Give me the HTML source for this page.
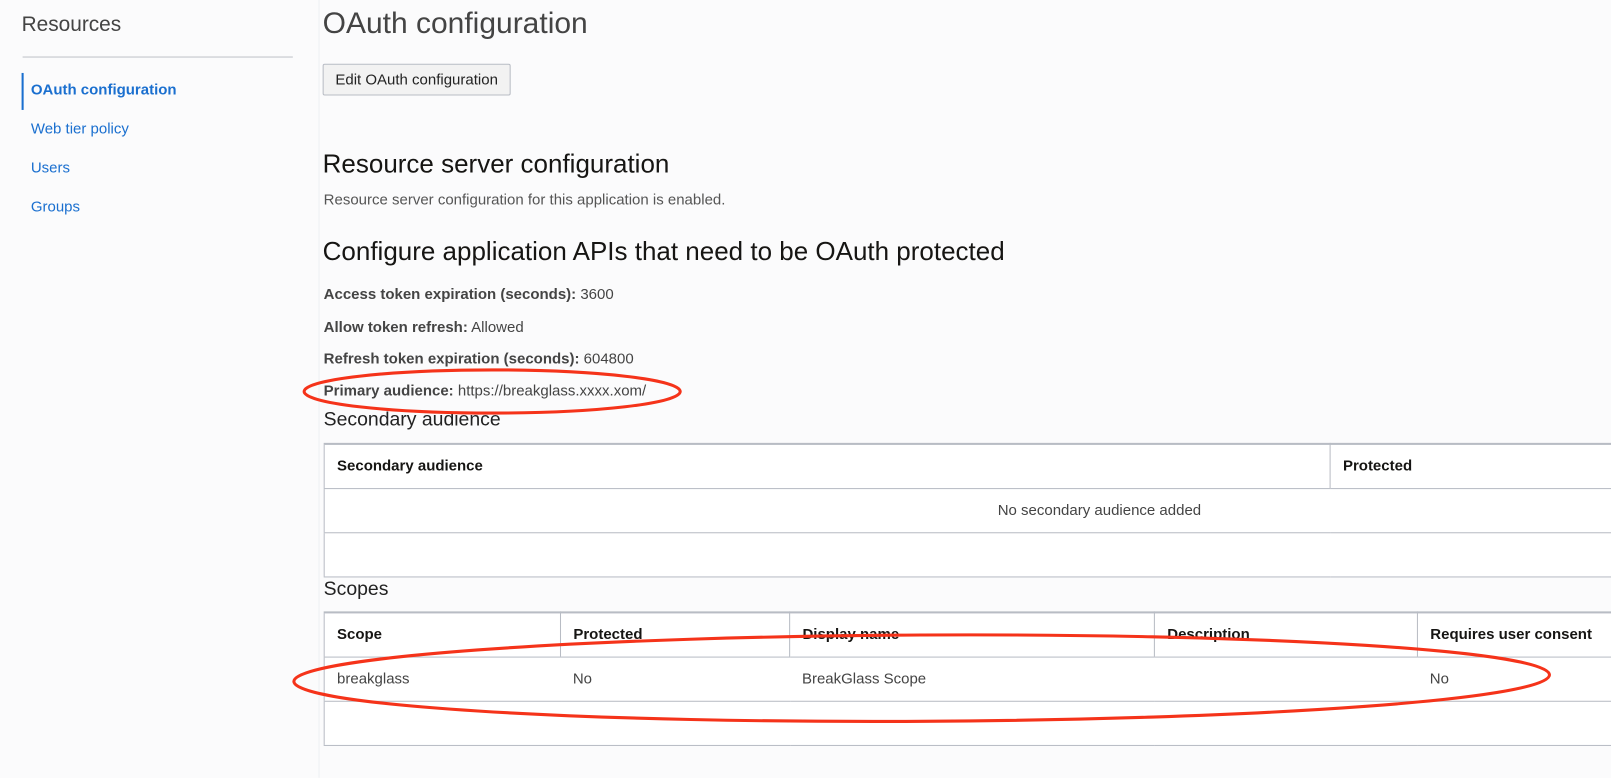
<!DOCTYPE html>
<html><head><style>
*{margin:0;padding:0;box-sizing:border-box}
body{width:1611px;height:757px;overflow:hidden;font-family:"Liberation Sans",sans-serif;background:#fbfbfc;position:relative;color:#333}
#w{position:absolute;left:0;top:0;width:1568px;height:737px;transform:scale(1.0275);transform-origin:0 0}
.side{position:absolute;left:0;top:0;width:311px;height:757px;background:#fbfbfc;border-right:1px solid #eef0f3}
.abs{position:absolute;white-space:nowrap}
.nav{position:absolute;left:30px;font-size:14.6px;color:#1a6fcf}
.b{font-weight:bold}
table{position:absolute;left:315px;border-collapse:collapse;background:#fff;border-top:2px solid #b8bcc4;border-left:1px solid #b8bcc4}
td{border-bottom:1px solid #b8bcc4;font-size:14.6px;padding:0 12px;height:43px;color:#444;white-space:nowrap}
td.h{font-weight:bold;color:#161513}
td.d{border-left:1px solid #b8bcc4}
.t{font-size:14.6px;color:#444}
</style></head><body><div id="w">
<div class="side">
<div class="abs" style="left:21px;top:13px;font-size:20.3px;color:#444">Resources</div>
<div style="position:absolute;left:22px;top:55px;width:263px;height:1px;background:#bfc2c8"></div>
<div style="position:absolute;left:21px;top:71px;width:2px;height:36px;background:#1a6fcf"></div>
<div class="nav b" style="top:80px">OAuth configuration</div>
<div class="nav" style="top:118px">Web tier policy</div>
<div class="nav" style="top:156px">Users</div>
<div class="nav" style="top:194px">Groups</div>
</div>
<div class="abs" style="left:314px;top:7px;font-size:29.2px;color:#444">OAuth configuration</div>
<div class="abs" style="left:314px;top:62px;width:183px;height:31px;border:1px solid #b8bcc4;border-radius:2px;background:#f2f2f2;font-size:14.6px;line-height:31px;text-align:center;color:#222">Edit OAuth configuration</div>
<div class="abs" style="left:314px;top:146px;font-size:25.3px;color:#161513">Resource server configuration</div>
<div class="abs t" style="left:315px;top:187px;color:#555">Resource server configuration for this application is enabled.</div>
<div class="abs" style="left:314px;top:231px;font-size:25.3px;color:#161513">Configure application APIs that need to be OAuth protected</div>
<div class="abs t" style="left:315px;top:279px"><b>Access token expiration (seconds):</b> 3600</div>
<div class="abs t" style="left:315px;top:311px"><b>Allow token refresh:</b> Allowed</div>
<div class="abs t" style="left:315px;top:342px"><b>Refresh token expiration (seconds):</b> 604800</div>
<div class="abs t" style="left:315px;top:373px"><b>Primary audience:</b> https://breakglass.xxxx.xom/</div>
<div class="abs" style="left:315px;top:398px;font-size:18.9px;color:#222">Secondary audience</div>
<table style="top:431px;width:1300px">
<tr><td class="h" style="width:979px">Secondary audience</td><td class="h d">Protected</td></tr>
<tr><td colspan="2" style="padding-left:655px">No secondary audience added</td></tr>
<tr><td colspan="2"></td></tr>
</table>
<div class="abs" style="left:315px;top:563px;font-size:18.9px;color:#222">Scopes</div>
<table style="top:595px;width:1300px">
<tr><td class="h" style="width:230px">Scope</td><td class="h d" style="width:223px">Protected</td><td class="h d" style="width:355px">Display name</td><td class="h d" style="width:256px">Description</td><td class="h d">Requires user consent</td></tr>
<tr><td>breakglass</td><td>No</td><td>BreakGlass Scope</td><td></td><td>No</td></tr>
<tr><td colspan="5"></td></tr>
</table>
<svg width="1611" height="757" style="position:absolute;left:0;top:0">
<ellipse cx="479" cy="381" rx="183" ry="21" fill="none" stroke="#f5331a" stroke-width="3"/>
<ellipse cx="897" cy="660" rx="611" ry="42" fill="none" stroke="#f5331a" stroke-width="3" transform="rotate(-0.3 897 660)"/>
</svg>
</div></body></html>
